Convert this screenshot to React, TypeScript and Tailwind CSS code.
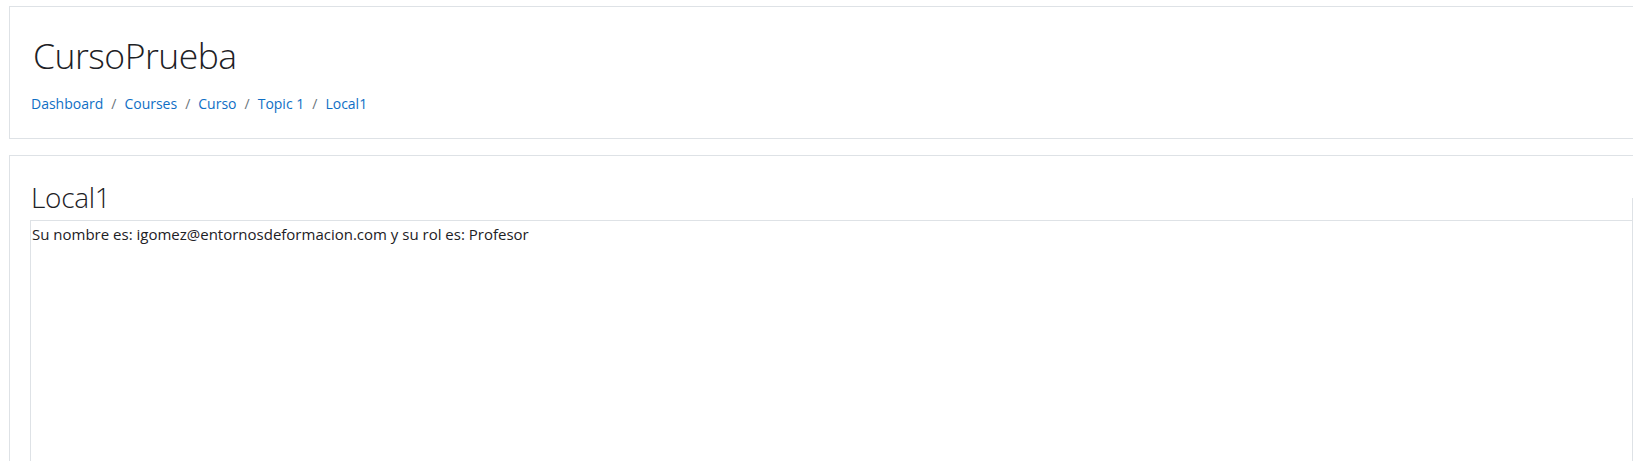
export default function App() {
  const crumbs = ["Dashboard", "Courses", "Curso", "Topic 1", "Local1"];

  return (
    <div className="w-[1633px] h-[461px] overflow-hidden bg-white font-['Open_Sans',sans-serif] text-[#1d2125]">
      <div className="pl-[9px] pt-[6px] w-[1700px] flex flex-col gap-[16px]">
        <header className="border border-[#dee2e6] h-[133px] px-[21px] pt-[27px]">
          <h1 className="ml-[2px] text-[35.5px] leading-[42px] font-light tracking-[-0.5px]">CursoPrueba</h1>
          <nav className="mt-[17px] flex items-center text-[14px] leading-[21px] text-[#0f6fc5]">
            {crumbs.map((c, i) => (
              <span key={c} className="flex items-center">
                {i > 0 && <span className="px-[8px] text-[#6a737b]">/</span>}
                <a href="#" className="hover:underline">{c}</a>
              </span>
            ))}
          </nav>
        </header>

        <section className="border border-[#dee2e6] h-[400px] pl-[20px] pt-[20px] flex items-start">
          <div className="w-[1602px] flex flex-col">
            <h2 className="mt-[4px] ml-[1px] text-[28px] leading-[34px] font-light tracking-[-0.3px] mb-[6px]">Local1</h2>
            <div className="border-t border-l border-[#dee2e6] h-[300px] pl-[1px] pt-[3px]">
              <p className="text-[15px] leading-[20px] text-[#1d2125]">
                Su nombre es: igomez@entornosdeformacion.com y su rol es: Profesor
              </p>
            </div>
          </div>
          <div className="mt-[22px] border-t border-l border-[#dee2e6] w-[60px] h-[300px]" />
        </section>
      </div>
    </div>
  );
}
